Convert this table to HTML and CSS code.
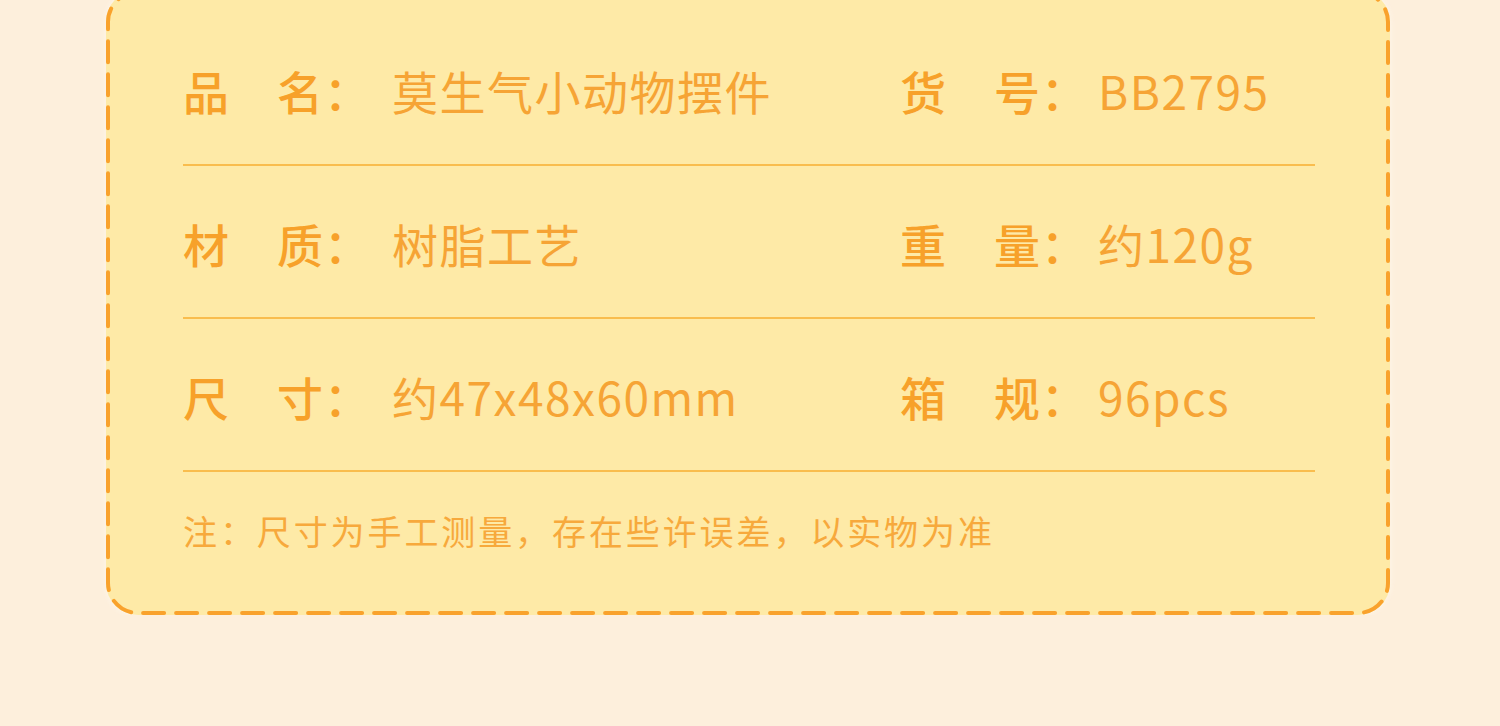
FILE: index.html
```html
<!DOCTYPE html>
<html lang="zh-CN">
<head>
  <meta charset="UTF-8">
  <title>产品参数</title>
  <link rel="stylesheet" href="styles.css">
</head>
<body class="spec-page">
  <div class="wrap">
    <div class="spec-card">
      <svg class="dash-border" aria-hidden="true">
        <rect class="dash-rect" x="2" y="2" rx="30" ry="30"></rect>
      </svg>

      <div class="spec-row">
        <span class="label">品　名：</span>
        <span class="value">莫生气小动物摆件</span>
        <span class="label">货　号：</span>
        <span class="value">BB2795</span>
      </div>

      <div class="spec-row">
        <span class="label">材　质：</span>
        <span class="value">树脂工艺</span>
        <span class="label">重　量：</span>
        <span class="value">约120g</span>
      </div>

      <div class="spec-row">
        <span class="label">尺　寸：</span>
        <span class="value">约47x48x60mm</span>
        <span class="label">箱　规：</span>
        <span class="value">96pcs</span>
      </div>

      <p class="note">注：尺寸为手工测量，存在些许误差，以实物为准</p>
    </div>
  </div>
</body>
</html>
```

FILE: styles.css
```css
body.spec-page {
  margin: 0;
  background: #fdefdc;
  font-family: "Noto Sans CJK SC", "Noto Sans", sans-serif;
  color: #f6a02c;
  overflow: hidden;
}

.wrap {
  padding: 0 110px 0 106px;
}

/* yellow card with dashed orange outline */
.spec-card {
  position: relative;
  margin-top: -10px;
  height: 625px;
  box-sizing: border-box;
  padding: 23px 75px 0 77px;
  background: #feeaa7;
  border-radius: 32px;
  box-shadow: 0 0 6px rgba(255, 250, 240, 0.8);
}

.dash-border {
  position: absolute;
  left: 0;
  top: 0;
  width: 100%;
  height: 100%;
  pointer-events: none;
}

.dash-rect {
  width: calc(100% - 4px);
  height: calc(100% - 4px);
  fill: none;
  stroke: #f9a22c;
  stroke-width: 4;
  stroke-dasharray: 21 12;
  stroke-linecap: round;
}

.spec-row {
  display: grid;
  grid-template-columns: 209px 508px 198px 1fr;
  align-items: center;
  padding: 47px 0 44px;
  border-bottom: 2px solid #f9bd4e;
  font-size: 46px;
  line-height: 60px;
  letter-spacing: 1px;
  white-space: nowrap;
}

.label {
  font-weight: 500;
  color: #f7a12a;
}

.value {
  font-weight: 400;
  letter-spacing: 1.5px;
  color: #f6a435;
}

.note {
  margin: 34px 0 0;
  font-size: 34px;
  line-height: 50px;
  letter-spacing: 2.9px;
  color: #f7a93c;
}
```
